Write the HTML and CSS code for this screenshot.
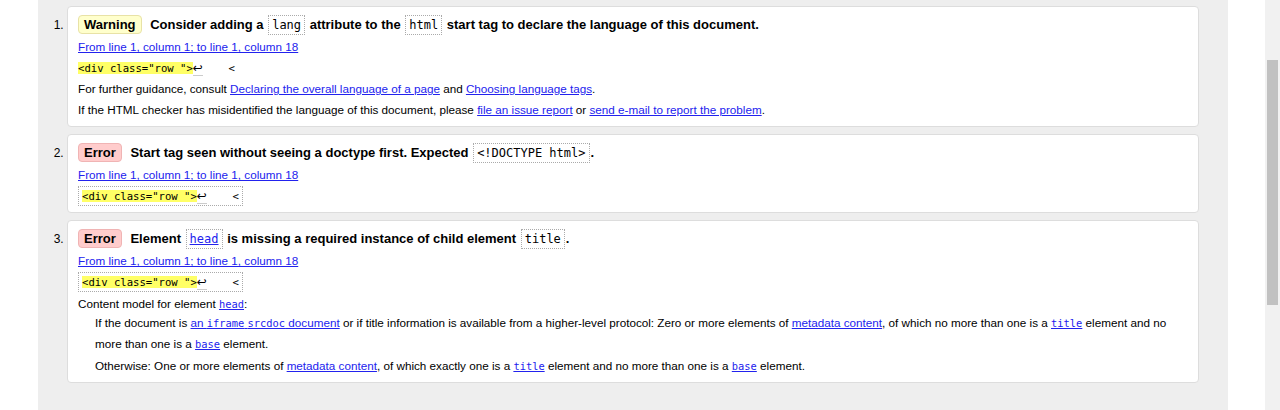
FILE: index.html
```html
<!DOCTYPE html>
<html lang="en">
<head>
<meta charset="utf-8">
<title>Nu Html Checker results</title>
<link rel="stylesheet" href="styles.css">
</head>
<body>
<div class="page">
  <div class="main">
    <ol class="messages">
      <li class="msg">
        <p class="title"><strong class="badge warning">Warning</strong> <span>Consider adding a <code class="tcode">lang</code> attribute to the <code class="tcode">html</code> start tag to declare the language of this document.</span></p>
        <p class="loc"><a href="#">From line 1, column 1; to line 1, column 18</a></p>
        <p class="extract"><code class="ex plain"><b>&lt;div class="row "&gt;</b><span class="lf">↩</span>    &lt;</code></p>
        <p class="info">For further guidance, consult <a href="#">Declaring the overall language of a page</a> and <a href="#">Choosing language tags</a>.</p>
        <p class="info">If the HTML checker has misidentified the language of this document, please <a href="#">file an issue report</a> or <a href="#">send e-mail to report the problem</a>.</p>
      </li>
      <li class="msg">
        <p class="title"><strong class="badge error">Error</strong> <span>Start tag seen without seeing a doctype first. Expected <code class="tcode">&lt;!DOCTYPE html&gt;</code>.</span></p>
        <p class="loc"><a href="#">From line 1, column 1; to line 1, column 18</a></p>
        <p class="extract"><code class="ex boxed"><b>&lt;div class="row "&gt;</b><span class="lf">↩</span>    &lt;</code></p>
      </li>
      <li class="msg">
        <p class="title"><strong class="badge error">Error</strong> <span>Element <code class="tcode"><a href="#">head</a></code> is missing a required instance of child element <code class="tcode">title</code>.</span></p>
        <p class="loc"><a href="#">From line 1, column 1; to line 1, column 18</a></p>
        <p class="extract"><code class="ex boxed"><b>&lt;div class="row "&gt;</b><span class="lf">↩</span>    &lt;</code></p>
        <p class="info model-head">Content model for element <a href="#"><code class="icode">head</code></a>:</p>
        <dl class="model">
          <dd>If the document is <a href="#">an <code class="icode">iframe</code> <code class="icode">srcdoc</code> document</a> or if title information is available from a higher-level protocol: Zero or more elements of <a href="#">metadata content</a>, of which no more than one is a <a href="#"><code class="icode">title</code></a> element and no more than one is a <a href="#"><code class="icode">base</code></a> element.</dd>
          <dd class="other">Otherwise: One or more elements of <a href="#">metadata content</a>, of which exactly one is a <a href="#"><code class="icode">title</code></a> element and no more than one is a <a href="#"><code class="icode">base</code></a> element.</dd>
        </dl>
      </li>
    </ol>
  </div>
</div>
<div class="scrollbar"><div class="thumb"></div></div>
</body>
</html>
```

FILE: styles.css
```css
html, body {
  margin: 0;
  height: 100%;
}
body {
  display: flex;
  background: #fff;
  font-family: "Liberation Sans", Arial, sans-serif;
  font-size: 11.7px;
  color: #000;
  overflow: hidden;
}
.page {
  flex: 1;
  min-width: 0;
}
.main {
  margin: 0 37px 0 38px;
  height: 100%;
  box-sizing: border-box;
  background: #eee;
  padding: 6px 29px 0 29px;
}
.messages {
  margin: 0;
  padding: 0;
  list-style: decimal outside;
}
.msg {
  background: #fff;
  border: 1px solid #ddd;
  border-radius: 4px;
  padding: 6px 10px 6px;
  margin-bottom: 7px;
}
.msg::marker {
  font-size: 12px;
}
.msg p {
  margin: 0;
}
a {
  color: #22e;
  text-decoration: underline;
}
.title {
  font-size: 13px;
  line-height: 23px;
  font-weight: bold;
}
.badge {
  display: inline-block;
  line-height: 17px;
  padding: 0 5px;
  border: 1px solid;
  border-radius: 4px;
  margin-right: 5px;
}
.badge.warning {
  background: #ffc;
  border-color: #e8e2a6;
}
.badge.error {
  background: #fcc;
  border-color: #f0b4b4;
}
.tcode {
  font-family: "DejaVu Sans Mono", monospace;
  font-weight: normal;
  font-size: 12px;
  line-height: 1;
  border: 1px dotted #aaa;
  padding: 2px 3px;
  margin: 0 1px;
}
.loc,
.info {
  line-height: 21px;
}
.msg .model-head {
  margin-top: 1px;
}
.extract {
  display: flex;
  align-items: center;
  height: 21px;
}
.ex {
  font-family: "DejaVu Sans Mono", monospace;
  font-size: 10.6px;
  line-height: 14px;
  white-space: pre;
}
.ex b {
  font-weight: normal;
  background: #ff6;
}
.ex.boxed {
  line-height: 18px;
  border: 1px dotted #aaa;
  padding: 0 3px;
}
.lf {
  font-family: "DejaVu Sans", sans-serif;
  font-size: 12px;
  line-height: 1;
  border-bottom: 1px solid #ccc;
}
.icode {
  font-family: "DejaVu Sans Mono", monospace;
  font-size: 10.4px;
  line-height: 1;
}
.model {
  margin: -2px 0 0 17px;
  line-height: 21px;
}
.model dd {
  margin: 0;
}
.model .other {
  margin-top: 1px;
}
.scrollbar {
  flex: none;
  width: 15px;
  background: #f1f1f1;
}
.thumb {
  margin: 60px 2px 0;
  height: 245px;
  background: #c1c1c1;
}
```
